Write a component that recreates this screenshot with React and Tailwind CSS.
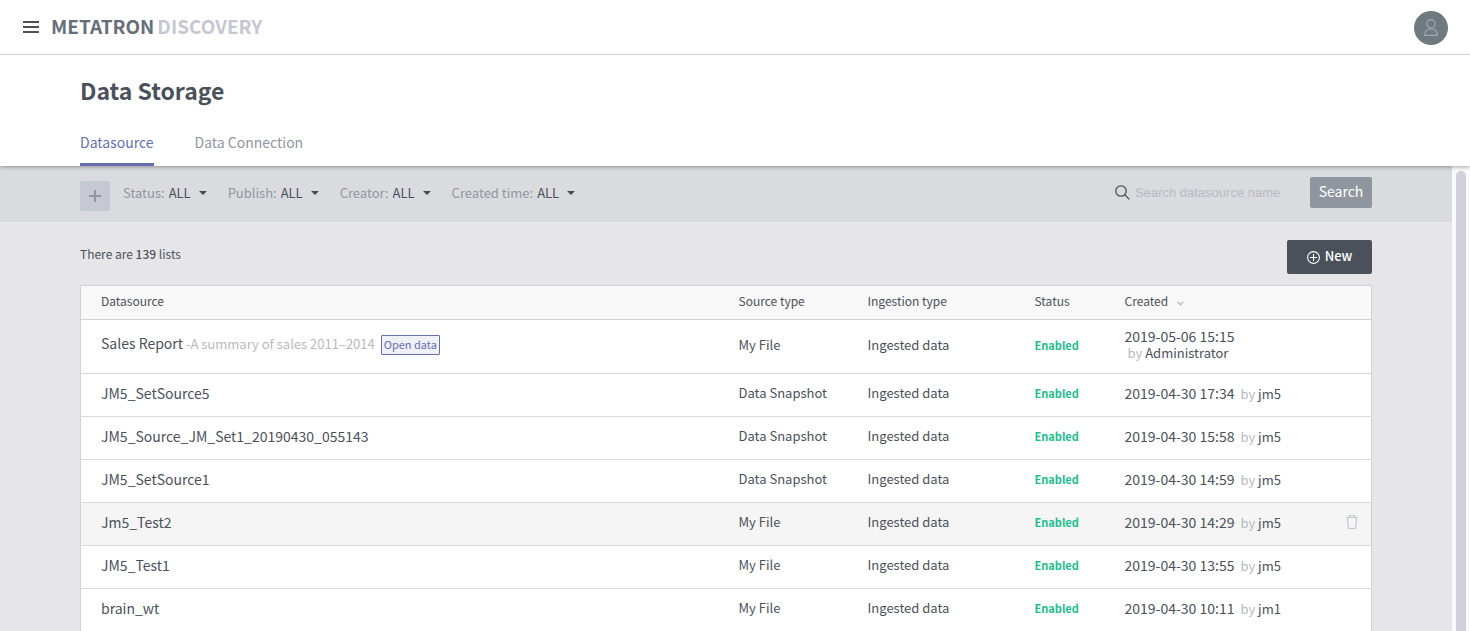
import React from "react";

const rows = [
  { name: "Sales Report", desc: "A summary of sales 2011–2014", open: true, source: "My File", date: "2019-05-06 15:15", by: "Administrator" },
  { name: "JM5_SetSource5", source: "Data Snapshot", date: "2019-04-30 17:34", by: "jm5" },
  { name: "JM5_Source_JM_Set1_20190430_055143", source: "Data Snapshot", date: "2019-04-30 15:58", by: "jm5" },
  { name: "JM5_SetSource1", source: "Data Snapshot", date: "2019-04-30 14:59", by: "jm5" },
  { name: "Jm5_Test2", source: "My File", date: "2019-04-30 14:29", by: "jm5", active: true },
  { name: "JM5_Test1", source: "My File", date: "2019-04-30 13:55", by: "jm5" },
  { name: "brain_wt", source: "My File", date: "2019-04-30 10:11", by: "jm1" },
];

function TopBar() {
  return (
    <header className="relative z-20 flex h-[55px] shrink-0 items-center border-b border-[#d0d1d8] bg-white pt-px pl-[23px] pr-[22px]">
      <div className="flex items-center gap-3 pb-[2px]">
        <button type="button" aria-label="Menu">
          <svg width="16" height="12" viewBox="0 0 16 12" fill="#4b515b" className="block">
            <path d="M0 0h16v2H0zM0 5h16v2H0zM0 10h16v2H0z" />
          </svg>
        </button>
        <a href="#home" className="flex gap-[3px] pb-px text-[19px] leading-[24px] font-bold text-[#666e79]">
          METATRON<span className="text-[#c5c7d2]">DISCOVERY</span>
        </a>
      </div>
      <button type="button" aria-label="Account" className="ml-auto">
        <svg width="34" height="34" viewBox="0 0 34 34" fill="none" className="block">
          <circle cx="17" cy="17" r="17" fill="#6f7980" />
          <g stroke="#a3aaaf" strokeWidth="1.2">
            <circle cx="17" cy="12.8" r="4.2" />
            <path d="M10.6 24.4c0-4 2.4-6.4 6.4-6.4s6.4 2.4 6.4 6.4z" strokeLinejoin="round" />
          </g>
        </svg>
      </button>
    </header>
  );
}

function Filter({ label }) {
  return (
    <label className="flex items-center gap-1 text-[13px] leading-[20px] text-[#90969f]">
      {label}:
      <span className="relative flex items-center">
        <select className="w-[38px] appearance-none bg-transparent text-[13px] leading-[20px] text-[#4b515b] outline-none">
          <option>ALL</option>
        </select>
        <svg width="8" height="4" viewBox="0 0 8 4" fill="#4b4b4b" className="pointer-events-none absolute right-0">
          <path d="M0 0h8L4 4z" />
        </svg>
      </span>
    </label>
  );
}

export default function App() {
  return (
    <div className="flex h-screen flex-col overflow-hidden bg-[#e6e6e8] font-['Noto_Sans_CJK_KR',sans-serif] text-[#4b515b]">
      <TopBar />
      <div className="relative z-10 flex h-[111px] shrink-0 flex-col justify-between bg-white px-20 pt-5 shadow-[0_1px_4px_rgba(0,0,0,0.35)]">
        <h1 className="text-[23px] leading-[30px] font-bold">Data Storage</h1>
        <nav className="flex gap-[41px] text-[14px] leading-[20px]">
          <a href="#datasource" className="border-b-3 border-[#666eb2] pb-[11px] text-[#666eb2]">Datasource</a>
          <a href="#connection" className="pb-[11px] text-[#90969f]">Data Connection</a>
        </nav>
      </div>
      <div className="flex min-h-0 flex-1">
        <main className="min-w-0 flex-1 overflow-hidden">
          <div className="flex h-14 items-start bg-[#dadbdf] px-20 pt-[11px]">
            <button type="button" aria-label="Add filter" className="mt-1 mr-[13px] flex size-[30px] items-center justify-center rounded-xs bg-[#c7c9d2]">
              <svg width="12" height="12" viewBox="0 0 12 12" fill="#90969f">
                <path d="M5 0h2v5h5v2H7v5H5V7H0V5h5z" />
              </svg>
            </button>
            <div className="mt-[6px] flex gap-[21px]">
              <Filter label="Status" />
              <Filter label="Publish" />
              <Filter label="Creator" />
              <Filter label="Created time" />
            </div>
            <div className="ml-auto flex">
              <label className="mr-5 flex h-[31px] items-center gap-[5px]">
                <svg width="15" height="15" viewBox="0 0 15 15" fill="none" stroke="#4b515b" strokeWidth="1.3" aria-label="Search">
                  <circle cx="6" cy="6" r="5.2" />
                  <path d="M9.8 9.8l4.6 4.6" />
                </svg>
                <input type="text" placeholder="Search datasource name" className="w-[155px] bg-transparent font-['Liberation_Sans',sans-serif] text-[13px] leading-[20px] outline-none placeholder:text-[#b7b9c2]" />
              </label>
              <button type="button" className="h-[31px] w-[62px] rounded-xs bg-[#90969f] pb-[3px] text-[14px] leading-[20px] text-white">Search</button>
            </div>
          </div>
          <div className="px-20 pt-[18px]">
            <div className="mb-[11px] flex h-[34px] items-center justify-between">
              <p className="pb-[6px] text-[12px] leading-[20px]">
                There are <strong className="font-medium">139</strong> lists
              </p>
              <button type="button" className="flex h-[34px] w-[85px] items-center justify-center gap-[5px] rounded-xs bg-[#4b515b] text-[13px] leading-[20px] font-medium text-white">
                <svg width="13" height="13" viewBox="0 0 13 13" fill="none" stroke="#fff" strokeWidth="1.1">
                  <circle cx="6.5" cy="6.5" r="5.9" />
                  <path d="M6.5 3v7M3 6.5h7" />
                </svg>
                <span className="pb-[2px]">New</span>
              </button>
            </div>
            <table className="w-full table-fixed border-collapse border border-[#d0d1d4] bg-white text-left text-[13px] leading-[16px]">
              <colgroup>
                <col />
                <col className="w-[129px]" />
                <col className="w-[167px]" />
                <col className="w-[90px]" />
                <col className="w-[192px]" />
                <col className="w-[55px]" />
              </colgroup>
              <thead>
                <tr className="h-[34px] border-b border-[#d0d1d4] bg-[#f8f8f8] text-[12px] [&>th]:pb-[3px] [&>th]:font-normal">
                  <th className="pl-5">Datasource</th>
                  <th>Source type</th>
                  <th>Ingestion type</th>
                  <th>Status</th>
                  <th>
                    <button type="button" className="flex items-center gap-[9px]">
                      Created
                      <svg width="7" height="5" viewBox="0 0 7 5" fill="none" stroke="#b7b9c2" strokeWidth="1.3" className="mt-1">
                        <path d="M.7.7l2.8 3 2.8-3" />
                      </svg>
                    </button>
                  </th>
                  <th aria-label="Actions" />
                </tr>
              </thead>
              <tbody>
                {rows.map((r) => (
                  <tr key={r.name} className={`border-b border-[#d8d9dc] [&>td]:pb-1 ${r.open ? "h-[54px]" : "h-[43px]"} ${r.active ? "bg-[#f5f5f5]" : ""}`}>
                    <td className="pl-5">
                      <span className="text-[14px]">{r.name}</span>
                      {r.desc && <span className="text-[#b7b9c2]"> -{r.desc}</span>}
                      {r.open && (
                        <span className="ml-[6px] inline-block rounded-[1px] border border-[#666eb2] bg-[#f0f0f7] px-[2px] pb-[2px] text-[11px] leading-[16px] text-[#666eb2]">Open data</span>
                      )}
                    </td>
                    <td>{r.source}</td>
                    <td>Ingested data</td>
                    <td className="text-[11px] font-bold text-[#1abe8e]">Enabled</td>
                    <td>
                      <span className="text-[14px]">{r.date}</span>{" "}
                      <span className="inline-block pl-[3px]"><span className="text-[#b7b9c2]">by</span> {r.by}</span>
                    </td>
                    <td>
                      {r.active && (
                        <button type="button" aria-label="Delete" className="ml-[29px] block">
                          <svg width="12" height="14" viewBox="0 0 12 14" fill="none" stroke="#c5c7cf" strokeWidth="1.2">
                            <path d="M0 2.5h12M3.5 2.5v-2h5v2M1.5 2.5l1 11h7l1-11" />
                          </svg>
                        </button>
                      )}
                    </td>
                  </tr>
                ))}
              </tbody>
            </table>
          </div>
        </main>
        <div aria-hidden="true" className="flex w-[18px] shrink-0 justify-center bg-[#fafafa] pt-[5px]">
          <div className="w-[10px] rounded-t-[5px] bg-[#d0d1da]" />
        </div>
      </div>
    </div>
  );
}
